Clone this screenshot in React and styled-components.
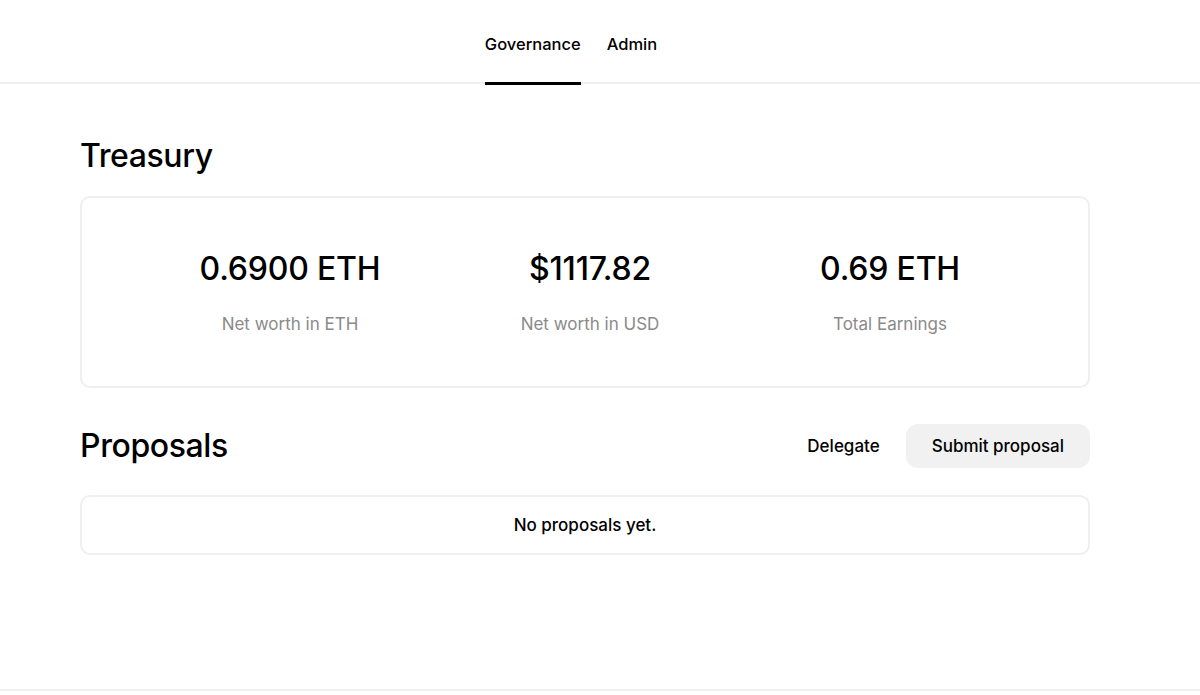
import React from "react";
import styled, { createGlobalStyle } from "styled-components";

const Global = createGlobalStyle`
  html, body { margin: 0; padding: 0; background: #fff; }
  body { font-family: Inter, "Noto Sans", Arial, sans-serif; color: #000; -webkit-font-smoothing: antialiased; }
  * { box-sizing: border-box; }
`;

const Header = styled.header`
  height: 84px;
  border-bottom: 2px solid #efefef;
  display: flex;
  justify-content: center;
  padding-right: 58px;
  gap: 26px;
`;

const Tab = styled.a`
  height: 85px;
  display: flex;
  align-items: center;
  padding-top: 5px;
  font-size: 16.5px;
  font-weight: 500;
  color: #000;
  text-decoration: none;
  border-bottom: 3px solid ${(p) => (p.$active ? "#000" : "transparent")};
  cursor: pointer;
`;

const Main = styled.main`
  max-width: 1010px;
  margin-left: 80px;
  padding-top: 53px;
  padding-bottom: 134px;
`;

const Title = styled.h2`
  margin: 0;
  font-size: 32px;
  line-height: 1.2;
  font-weight: 500;
  letter-spacing: -0.4px;
`;

const Card = styled.div`
  border: 2px solid #efefef;
  border-radius: 10px;
  background: #fff;
`;

const StatsCard = styled(Card)`
  margin-top: 21px;
  padding: 52px 48px 50px 58px;
  display: grid;
  grid-template-columns: repeat(3, 300px);
`;

const Stat = styled.div`
  display: flex;
  flex-direction: column;
  align-items: center;
`;

const Value = styled.div`
  font-size: 32px;
  line-height: 1.2;
  font-weight: 500;
  letter-spacing: -0.2px;
`;

const Label = styled.div`
  margin-top: 23px;
  font-size: 17px;
  line-height: 24px;
  color: #8a8a8a;
`;

const Row = styled.div`
  margin-top: 36px;
  display: flex;
  align-items: center;
  justify-content: space-between;
`;

const Actions = styled.div`
  display: flex;
  align-items: center;
`;

const Button = styled.button`
  height: 44px;
  padding: 0 26px;
  border: none;
  border-radius: 12px;
  background: ${(p) => (p.$filled ? "#f1f1f1" : "transparent")};
  font-family: inherit;
  font-size: 17px;
  font-weight: 500;
  color: #000;
  cursor: pointer;
`;

const EmptyCard = styled(Card)`
  margin-top: 27px;
  padding: 16px;
  text-align: center;
  font-size: 17px;
  line-height: 24px;
  font-weight: 500;
`;

const Footer = styled.footer`
  border-top: 2px solid #efefef;
  height: 40px;
`;

const stats = [
  { value: "0.6900 ETH", label: "Net worth in ETH" },
  { value: "$1117.82", label: "Net worth in USD" },
  { value: "0.69 ETH", label: "Total Earnings" },
];

export default function App() {
  return (
    <>
      <Global />
      <Header>
        <Tab $active>Governance</Tab>
        <Tab>Admin</Tab>
      </Header>
      <Main>
        <Title>Treasury</Title>
        <StatsCard>
          {stats.map((s) => (
            <Stat key={s.label}>
              <Value>{s.value}</Value>
              <Label>{s.label}</Label>
            </Stat>
          ))}
        </StatsCard>
        <Row>
          <Title>Proposals</Title>
          <Actions>
            <Button>Delegate</Button>
            <Button $filled>Submit proposal</Button>
          </Actions>
        </Row>
        <EmptyCard>No proposals yet.</EmptyCard>
      </Main>
      <Footer />
    </>
  );
}
